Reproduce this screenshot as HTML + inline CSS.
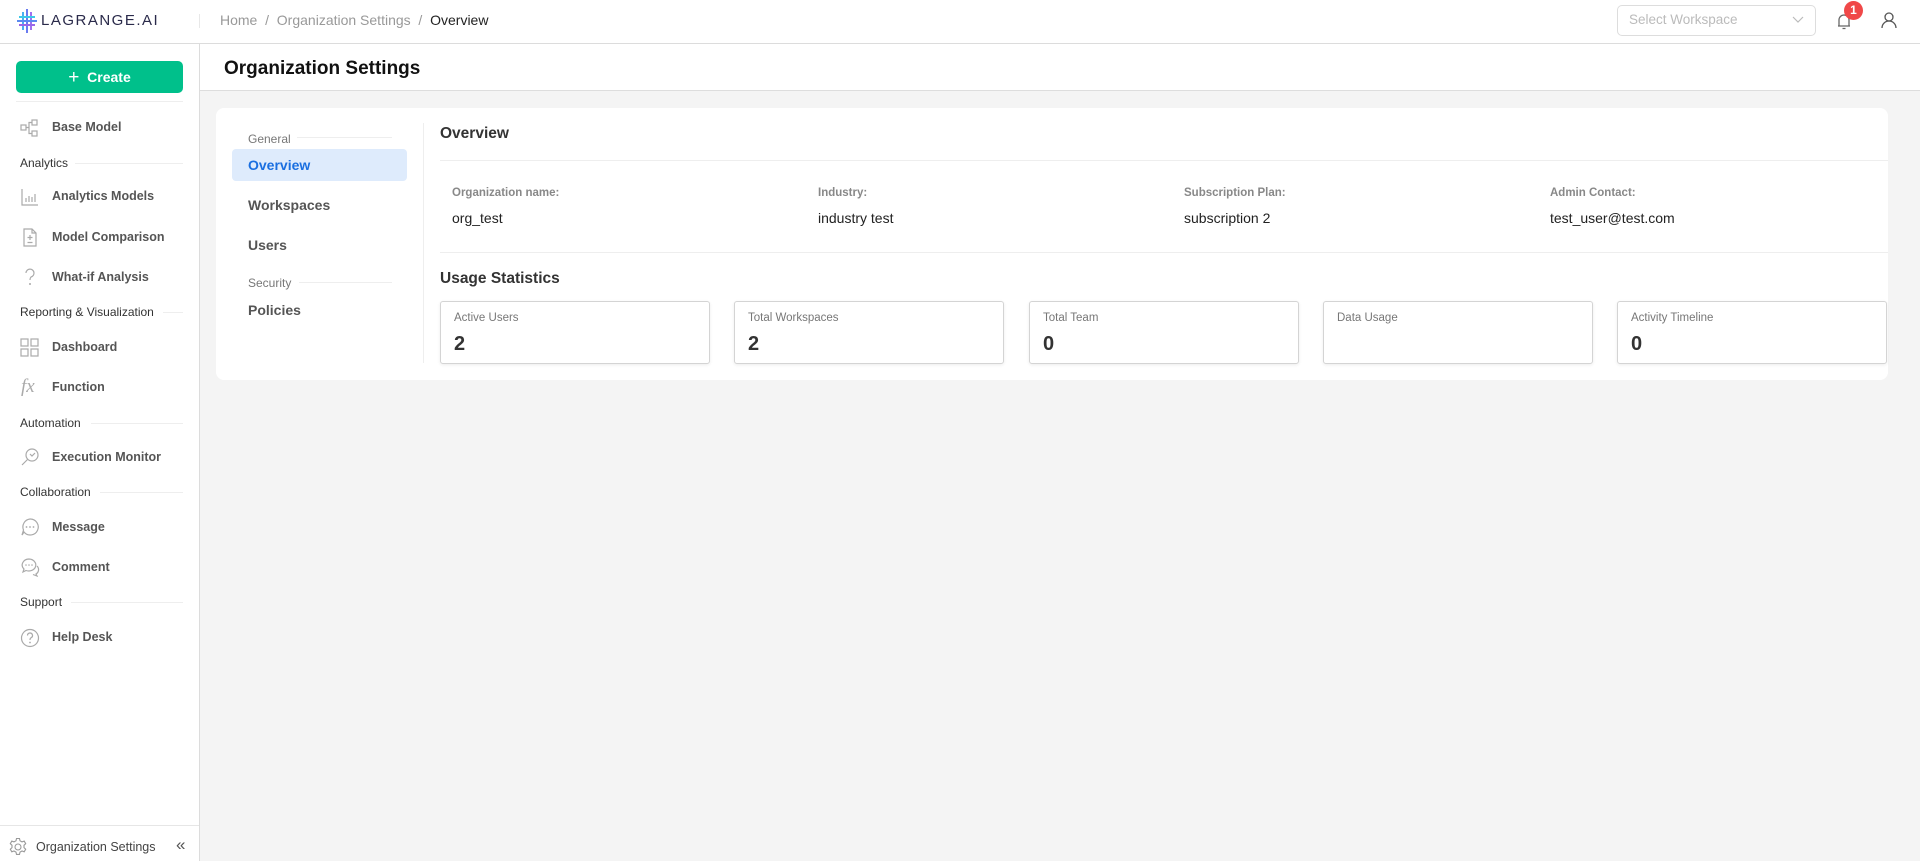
<!DOCTYPE html>
<html><head><meta charset="utf-8"><style>
*{box-sizing:border-box;margin:0;padding:0}
body{width:1920px;height:861px;overflow:hidden;font-family:"Liberation Sans",sans-serif;background:#f4f4f4;position:relative;color:#333}
.a{position:absolute;white-space:nowrap}
#hdr{left:0;top:0;width:1920px;height:44px;background:#fff;border-bottom:1px solid #dcdcdc}
#side{left:0;top:44px;width:200px;height:817px;background:#fff;border-right:1px solid #dcdcdc}
.it{left:52px;font-size:12.5px;color:#555;font-weight:bold}
.sec{left:20px;font-size:12px;color:#333}
.ln{height:1px;background:#eee}
.ic{left:20px;width:20px;height:20px}
.lab{font-size:11.5px;color:#888;font-weight:bold}
.val{font-size:14px;color:#222}
.card{top:301px;width:270px;height:63px;background:#fff;border:1px solid #d4d4d4;border-radius:3px;box-shadow:0 1px 3px rgba(0,0,0,.08)}
.card .t{position:absolute;left:13px;top:10px;font-size:11.5px;color:#777}
.card .n{position:absolute;left:13px;top:31px;font-size:20px;font-weight:bold;color:#333}
</style></head><body>
<div class="a" id="hdr"></div>
<svg class="a" style="left:16px;top:8px" width="22" height="26" viewBox="0 0 22 26">
<g stroke-width="2">
<line x1="11" y1="1" x2="11" y2="25" stroke="#6a7bf0"/>
<line x1="7" y1="4" x2="7" y2="22" stroke="#4ab0f0"/>
<line x1="15" y1="4" x2="15" y2="22" stroke="#a070f0"/>
<line x1="1" y1="13" x2="21" y2="13" stroke="#5a8af0"/>
<line x1="3" y1="9" x2="19" y2="9" stroke="#3cc8e8"/>
<line x1="3" y1="17" x2="19" y2="17" stroke="#9a68e8"/>
</g></svg>
<div class="a" style="left:41px;top:12px;font-size:15px;letter-spacing:1.5px;color:#2a2a4a">LAGRANGE.AI</div>
<div class="a" style="left:199px;top:14px;width:1px;height:14px;background:#e8e8e8"></div>
<div class="a" style="left:220px;top:12px;font-size:14px;color:#999">Home &nbsp;/&nbsp; Organization Settings &nbsp;/&nbsp; <span style="color:#222">Overview</span></div>
<div class="a" style="left:1617px;top:5px;width:199px;height:31px;border:1px solid #ddd;border-radius:5px"></div>
<div class="a" style="left:1629px;top:12px;font-size:13.5px;color:#bbb">Select Workspace</div>
<svg class="a" style="left:1792px;top:15px" width="12" height="10"><path d="M1 2 L6 7 L11 2" fill="none" stroke="#bbb" stroke-width="1.2"/></svg>
<svg class="a" style="left:1836px;top:11px" width="16" height="20" viewBox="0 0 16 20"><path d="M3 15 V9 a5 5 0 0 1 10 0 V15 H2 M14 15 H2 M6.5 17.5 h3" fill="none" stroke="#666" stroke-width="1.3"/></svg>
<div class="a" style="left:1844px;top:1px;width:19px;height:19px;border-radius:50%;background:#f04848;color:#fff;font-size:12px;font-weight:bold;text-align:center;line-height:19px">1</div>
<svg class="a" style="left:1880px;top:11px" width="18" height="18" viewBox="0 0 18 18"><circle cx="9" cy="6" r="4" fill="none" stroke="#555" stroke-width="1.3"/><path d="M2 17 a7 7 0 0 1 14 0" fill="none" stroke="#555" stroke-width="1.3"/></svg>

<div class="a" id="side"></div>
<div class="a" style="left:16px;top:61px;width:167px;height:32px;background:#00c08b;border-radius:5px;color:#fff;font-weight:bold;font-size:14px;text-align:center;line-height:32px"><span style="font-weight:normal;font-size:19px;vertical-align:-1px">+</span>&nbsp; Create</div>
<div class="a ln" style="left:16px;top:101px;width:167px"></div>

<svg class="a ic" style="top:118px" viewBox="0 0 20 20"><g fill="none" stroke="#aaa" stroke-width="1.2"><rect x="1" y="7" width="5" height="5"/><rect x="12" y="2" width="5" height="5"/><rect x="12" y="13" width="5" height="5"/><path d="M6 9.5 H9 V4.5 H12 M9 9.5 V15.5 H12"/></g></svg>
<div class="a it" style="top:120px">Base Model</div>
<div class="a sec" style="top:156px">Analytics</div><div class="a ln" style="left:75px;top:163px;width:108px"></div>
<svg class="a ic" style="top:187px" viewBox="0 0 20 20"><path d="M2 2 V18 H18 M6 15 V11 M9 15 V9 M12 15 V10 M15 15 V7" fill="none" stroke="#aaa" stroke-width="1.2"/></svg>
<div class="a it" style="top:189px">Analytics Models</div>
<svg class="a ic" style="top:227px" viewBox="0 0 20 20"><path d="M4 2 H12 L16 6 V19 H4 Z M12 2 V6 H16 M10 8 V13 M7.5 10.5 H12.5 M7.5 15.5 H12.5" fill="none" stroke="#aaa" stroke-width="1.2"/></svg>
<div class="a it" style="top:230px">Model Comparison</div>
<svg class="a ic" style="top:267px" viewBox="0 0 20 20"><path d="M6 6 a4 4 0 1 1 5 4 Q10 11 10 13" fill="none" stroke="#aaa" stroke-width="1.2"/><circle cx="10" cy="17" r="1" fill="#aaa"/></svg>
<div class="a it" style="top:270px">What-if Analysis</div>
<div class="a sec" style="top:305px">Reporting &amp; Visualization</div><div class="a ln" style="left:163px;top:312px;width:20px"></div>
<svg class="a ic" style="top:338px" viewBox="0 0 20 20"><g fill="none" stroke="#aaa" stroke-width="1.2"><rect x="1" y="1" width="7" height="7"/><rect x="11" y="1" width="7" height="7"/><rect x="1" y="11" width="7" height="7"/><rect x="11" y="11" width="7" height="7"/></g></svg>
<div class="a it" style="top:340px">Dashboard</div>
<div class="a" style="left:21px;top:376px;font-size:19px;font-style:italic;color:#aaa;font-family:'Liberation Serif',serif">fx</div>
<div class="a it" style="top:380px">Function</div>
<div class="a sec" style="top:416px">Automation</div><div class="a ln" style="left:91px;top:423px;width:92px"></div>
<svg class="a ic" style="top:447px" viewBox="0 0 20 20"><circle cx="12" cy="8" r="6" fill="none" stroke="#aaa" stroke-width="1.2"/><path d="M7.5 12.5 L2 18 M10 7 L12 9 L15 6" fill="none" stroke="#aaa" stroke-width="1.2"/></svg>
<div class="a it" style="top:450px">Execution Monitor</div>
<div class="a sec" style="top:485px">Collaboration</div><div class="a ln" style="left:100px;top:492px;width:83px"></div>
<svg class="a ic" style="top:517px" viewBox="0 0 20 20"><path d="M10 2 a8 8 0 1 1 -6 13 L2 18 L3.5 13 A8 8 0 0 1 10 2 Z" fill="none" stroke="#aaa" stroke-width="1.2"/><circle cx="6.5" cy="10" r=".9" fill="#aaa"/><circle cx="10" cy="10" r=".9" fill="#aaa"/><circle cx="13.5" cy="10" r=".9" fill="#aaa"/></svg>
<div class="a it" style="top:520px">Message</div>
<svg class="a ic" style="top:557px" viewBox="0 0 20 20"><path d="M9 2 a7 6 0 1 1 -3 11.5 L3 15 L4 12 A7 6 0 0 1 9 2 Z M17 9 a5 5 0 0 1 -1 8 L17 19 L13 17.5" fill="none" stroke="#aaa" stroke-width="1.2"/><circle cx="6" cy="8" r=".8" fill="#aaa"/><circle cx="9" cy="8" r=".8" fill="#aaa"/><circle cx="12" cy="8" r=".8" fill="#aaa"/></svg>
<div class="a it" style="top:560px">Comment</div>
<div class="a sec" style="top:595px">Support</div><div class="a ln" style="left:71px;top:602px;width:112px"></div>
<svg class="a ic" style="top:628px" viewBox="0 0 20 20"><circle cx="10" cy="10" r="8.5" fill="none" stroke="#aaa" stroke-width="1.2"/><path d="M7.5 7.5 a2.5 2.5 0 1 1 3.5 2.3 Q10 10.5 10 12" fill="none" stroke="#aaa" stroke-width="1.2"/><circle cx="10" cy="14.5" r=".9" fill="#aaa"/></svg>
<div class="a it" style="top:630px">Help Desk</div>
<div class="a ln" style="left:0;top:825px;width:199px;background:#e6e6e6"></div>
<svg class="a" style="left:8px;top:837px" width="20" height="20" viewBox="0 0 20 20"><circle cx="10" cy="10" r="3" fill="none" stroke="#999" stroke-width="1.1"/><path d="M8.5 1.5 h3 l.5 2.3 2 1.1 2.2-.8 1.5 2.6-1.7 1.6 v2.3 l1.7 1.6-1.5 2.6-2.2-.8-2 1.1-.5 2.3 h-3 l-.5-2.3-2-1.1-2.2.8-1.5-2.6 1.7-1.6 v-2.3 L2.3 6.7 3.8 4.1 6 4.9 8 3.8 Z" fill="none" stroke="#999" stroke-width="1.1"/></svg>
<div class="a" style="left:36px;top:840px;font-size:12.5px;color:#444">Organization Settings</div>
<div class="a" style="left:176px;top:835px;font-size:17px;color:#555">«</div>

<div class="a" style="left:200px;top:44px;width:1720px;height:47px;background:#fff;border-bottom:1px solid #ddd"></div>
<div class="a" style="left:224px;top:58px;font-size:19px;font-weight:bold;color:#111">Organization Settings</div>

<div class="a" style="left:216px;top:108px;width:1672px;height:272px;background:#fff;border-radius:8px"></div>
<div class="a" style="left:248px;top:132px;font-size:12px;color:#777">General</div><div class="a ln" style="left:297px;top:137px;width:95px"></div>
<div class="a" style="left:232px;top:149px;width:175px;height:32px;background:#deebfc;border-radius:4px"></div>
<div class="a" style="left:248px;top:157px;font-size:14px;color:#1a6fe0;font-weight:bold">Overview</div>
<div class="a" style="left:248px;top:197px;font-size:14px;color:#555;font-weight:bold">Workspaces</div>
<div class="a" style="left:248px;top:237px;font-size:14px;color:#555;font-weight:bold">Users</div>
<div class="a" style="left:248px;top:276px;font-size:12px;color:#777">Security</div><div class="a ln" style="left:299px;top:282px;width:93px"></div>
<div class="a" style="left:248px;top:302px;font-size:14px;color:#555;font-weight:bold">Policies</div>
<div class="a" style="left:423px;top:123px;width:1px;height:240px;background:#eee"></div>

<div class="a" style="left:440px;top:125px;font-size:15.5px;font-weight:bold;color:#333">Overview</div>
<div class="a ln" style="left:440px;top:160px;width:1448px"></div>
<div class="a lab" style="left:452px;top:187px">Organization name:</div><div class="a val" style="left:452px;top:210px">org_test</div>
<div class="a lab" style="left:818px;top:187px">Industry:</div><div class="a val" style="left:818px;top:210px">industry test</div>
<div class="a lab" style="left:1184px;top:187px">Subscription Plan:</div><div class="a val" style="left:1184px;top:210px">subscription 2</div>
<div class="a lab" style="left:1550px;top:187px">Admin Contact:</div><div class="a val" style="left:1550px;top:210px">test_user@test.com</div>
<div class="a ln" style="left:440px;top:252px;width:1448px"></div>
<div class="a" style="left:440px;top:270px;font-size:15.5px;font-weight:bold;color:#333">Usage Statistics</div>

<div class="a card" style="left:440px"><div class="t">Active Users</div><div class="n">2</div></div>
<div class="a card" style="left:734px"><div class="t">Total Workspaces</div><div class="n">2</div></div>
<div class="a card" style="left:1029px"><div class="t">Total Team</div><div class="n">0</div></div>
<div class="a card" style="left:1323px"><div class="t">Data Usage</div></div>
<div class="a card" style="left:1617px"><div class="t">Activity Timeline</div><div class="n">0</div></div>
</body></html>
